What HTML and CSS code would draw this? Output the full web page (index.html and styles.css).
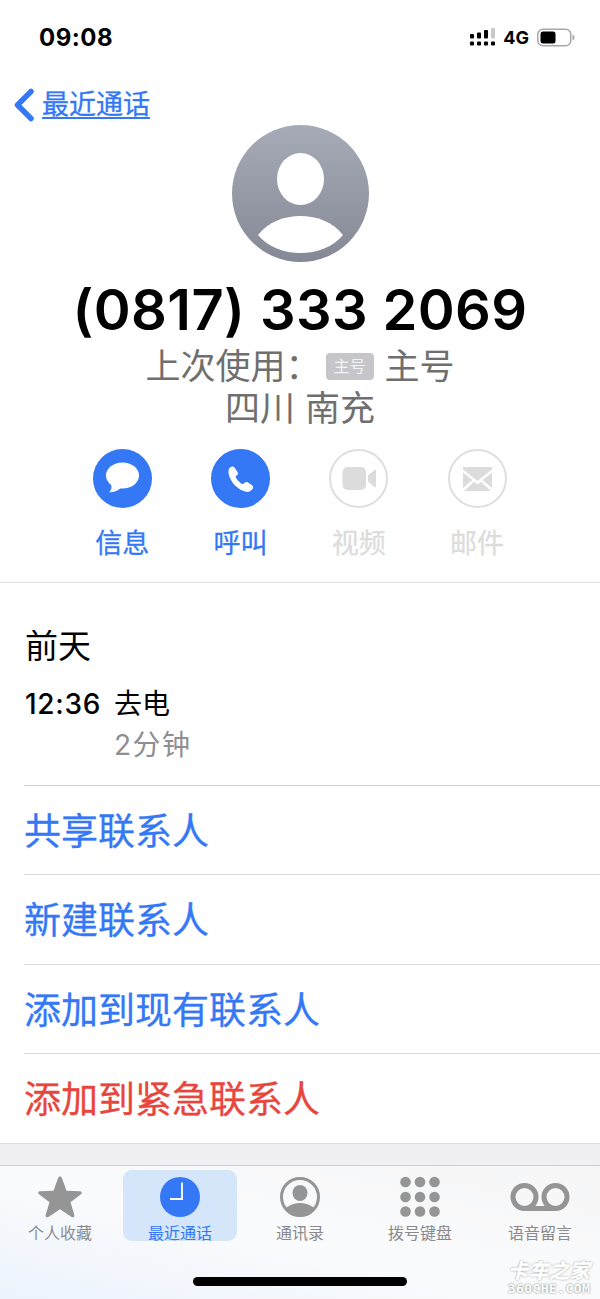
FILE: index.html
```html
<!DOCTYPE html>
<html lang="zh-CN">
  <head>
    <meta charset="UTF-8">
    <meta name="viewport" content="width=device-width, initial-scale=1.0">
    <title>最近通话</title>
    <link rel="stylesheet" href="styles.css">
  </head>
  <body>
    <div class="screen">
      <div class="status-bar">
        <span class="time">09:08</span>
        <div class="status-right">
          <svg class="signal" width="25" height="19" viewBox="0 0 25 19">
            <rect x="0" y="13.500" width="4" height="4" rx="1"/>
            <rect x="7" y="13.500" width="4" height="4" rx="1"/>
            <rect x="14" y="13.500" width="4" height="4" rx="1"/>
            <rect x="21" y="13.500" width="4" height="4" rx="1"/>
            <rect x="0" y="6" width="4" height="4.500" rx="1"/>
            <rect x="7" y="4.500" width="4" height="6" rx="1"/>
            <rect x="14" y="2" width="4" height="8.500" rx="1"/>
            <rect x="21" y="0" width="4" height="10.500" rx="1" fill="#c9c9c9"/>
          </svg>
          <span class="net">4G</span>
          <svg class="battery" width="38" height="19" viewBox="0 0 38 19">
            <rect x="0.75" y="1.25" width="33" height="16.5" rx="5" fill="none" stroke="#a8a8a8" stroke-width="1.5"/>
            <rect x="3.5" y="3.5" width="15" height="12" rx="2.5" fill="#000"/>
            <path d="M35.5 6.5c1.5.6 2 1.7 2 3s-.5 2.400-2 3z" fill="#a8a8a8"/>
          </svg>
        </div>
      </div>

      <div class="nav">
        <svg width="22" height="34" viewBox="0 0 22 34">
          <path d="M18 3.500 4.500 17 18 30.500" fill="none" stroke="#3478f6" stroke-width="5.500" stroke-linecap="round" stroke-linejoin="round"/>
        </svg>
        <span class="back-label">最近通话</span>
      </div>

      <div class="contact">
        <svg class="avatar" width="137" height="137" viewBox="0 0 137 137">
          <defs>
            <linearGradient id="avatarFill" x1="0" y1="0" x2="0" y2="1">
              <stop offset="0" stop-color="#a7abb8"/>
              <stop offset="1" stop-color="#858995"/>
            </linearGradient>
          </defs>
          <circle cx="68.500" cy="68.500" r="68.500" fill="url(#avatarFill)"/>
          <ellipse cx="68.500" cy="54" rx="23.500" ry="26" fill="#fff"/>
          <path d="M26 110C36 97 52 91 68.500 91S101 97 111 110C101 122 85 128 68.500 128S36 122 26 110Z" fill="#fff"/>
        </svg>
        <div class="number">(0817) 333 2069</div>
        <div class="meta meta-used">
          <span>上次使用：</span>
          <span class="sim-badge">主号</span>
          <span>主号</span>
        </div>
        <div class="meta">四川 南充</div>
      </div>

      <div class="actions">
        <div class="action">
          <div class="action-icon on">
            <svg width="59" height="59" viewBox="0 0 59 59">
              <ellipse cx="29.500" cy="26.500" rx="16.500" ry="13" fill="#fff"/>
              <path d="M18 35c1 3.500.5 6-1.800 8.300 4.300.2 8.300-1.300 11.800-4.300z" fill="#fff"/>
            </svg>
          </div>
          <span class="action-label">信息</span>
        </div>
        <div class="action">
          <div class="action-icon on">
            <svg width="59" height="59" viewBox="0 0 59 59">
              <path d="M19 18.500C20.500 17 22.500 17 23.500 18.500L26.500 23C27.300 24.300 27 25.500 26 26.300L24.500 27.500C25.500 30.500 29 34 32 35.300L33.500 33.800C34.500 32.800 35.800 32.600 37 33.400L41 36.200C42.500 37.300 42.500 39 41.300 40.300C39.500 42.300 37.500 43.300 35 42.800C27 41 19.500 33.500 17.700 25C17.200 22.500 17.500 20 19 18.500Z" fill="#fff"/>
            </svg>
          </div>
          <span class="action-label">呼叫</span>
        </div>
        <div class="action off">
          <div class="action-icon">
            <svg width="59" height="59" viewBox="0 0 59 59">
              <rect x="13.500" y="18" width="23.500" height="23" rx="5" fill="#dcdcdc"/>
              <path d="M39 26.500 45.500 21c.8-.6 1.500-.2 1.500.8v15.400c0 1-.7 1.400-1.500.8L39 32.500z" fill="#dcdcdc"/>
            </svg>
          </div>
          <span class="action-label">视频</span>
        </div>
        <div class="action off">
          <div class="action-icon">
            <svg width="59" height="59" viewBox="0 0 59 59">
              <path d="M15 20.500 29.500 32 44 20.500V18H15z" fill="#dcdcdc"/>
              <path d="M15 23.500V39l9.500-8zM44 23.500V39l-9.500-8zM16 42h27l-10-9.300-3.500 2.800-3.500-2.800z" fill="#dcdcdc"/>
            </svg>
          </div>
          <span class="action-label">邮件</span>
        </div>
      </div>

      <div class="history">
        <div class="history-day">前天</div>
        <div class="history-row">
          <span class="history-time">12:36</span>
          <div>
            <div class="history-type">去电</div>
            <div class="history-length">2分钟</div>
          </div>
        </div>
      </div>

      <div class="options">
        <div class="option">共享联系人</div>
        <div class="option">新建联系人</div>
        <div class="option">添加到现有联系人</div>
        <div class="option danger">添加到紧急联系人</div>
      </div>

      <div class="spacer"></div>

      <div class="tab-bar">
        <div class="tabs">
          <div class="tab">
            <svg width="46" height="44" viewBox="0 0 46 44">
              <path d="M23 1.500c1 0 1.600.6 2 1.700l4.500 12.600 13.300.4c2 .1 2.700 1.800 1.200 3l-10.500 8 3.800 12.800c.5 1.900-1.100 3-2.700 1.900L23 34.300l-11.600 7.600c-1.600 1.100-3.200 0-2.700-1.900l3.800-12.800-10.500-8c-1.500-1.200-.8-2.900 1.200-3l13.300-.4L21 3.200c.4-1.100 1-1.700 2-1.700z" fill="#959595"/>
            </svg>
            <span class="tab-label">个人收藏</span>
          </div>
          <div class="tab active">
            <svg width="46" height="44" viewBox="0 0 46 44">
              <circle cx="23" cy="22" r="20" fill="#3478f6"/>
              <path d="M25 7.500V24H13" fill="none" stroke="#fff" stroke-width="1.800"/>
            </svg>
            <span class="tab-label">最近通话</span>
          </div>
          <div class="tab">
            <svg width="46" height="44" viewBox="0 0 46 44">
              <defs>
                <clipPath id="contactClip"><circle cx="23" cy="22" r="18"/></clipPath>
              </defs>
              <circle cx="23" cy="22" r="18.500" fill="none" stroke="#959595" stroke-width="3"/>
              <ellipse cx="23" cy="18" rx="7.500" ry="8" fill="#959595"/>
              <ellipse cx="23" cy="40" rx="17" ry="12" fill="#959595" clip-path="url(#contactClip)"/>
            </svg>
            <span class="tab-label">通讯录</span>
          </div>
          <div class="tab">
            <svg width="46" height="44" viewBox="0 0 46 44">
              <g fill="#959595">
                <circle cx="8.500" cy="7" r="5.300"/><circle cx="23" cy="7" r="5.300"/><circle cx="37.500" cy="7" r="5.300"/>
                <circle cx="8.500" cy="22" r="5.300"/><circle cx="23" cy="22" r="5.300"/><circle cx="37.500" cy="22" r="5.300"/>
                <circle cx="8.500" cy="36.500" r="5.300"/><circle cx="23" cy="36.500" r="5.300"/><circle cx="37.500" cy="36.500" r="5.300"/>
              </g>
            </svg>
            <span class="tab-label">拨号键盘</span>
          </div>
          <div class="tab">
            <svg width="62" height="44" viewBox="0 0 62 44">
              <g fill="none" stroke="#959595" stroke-width="5">
                <circle cx="15.500" cy="22" r="11.500"/>
                <circle cx="46.500" cy="22" r="11.500"/>
                <path d="M15.500 33.500h31"/>
              </g>
            </svg>
            <span class="tab-label">语音留言</span>
          </div>
        </div>
        <div class="home-bar"></div>
        <div class="watermark">
          <span class="wm-name">卡车之家</span>
          <span class="wm-url">360CHE.COM</span>
        </div>
      </div>
    </div>
  </body>
</html>
```

FILE: styles.css
```css
* { box-sizing: border-box; }
html, body { margin: 0; padding: 0; background: #fff; }
body { font-family: Inter, "Noto Sans CJK SC", sans-serif; color: #000; }
.screen { width: 600px; height: 1299px; display: flex; flex-direction: column; overflow: hidden; }

.status-bar { height: 74px; flex-shrink: 0; padding: 0 25px 0 39px; display: flex; align-items: center; justify-content: space-between; }
.time { font-size: 24px; font-weight: 700; letter-spacing: 0.5px; }
.status-right { display: flex; align-items: center; gap: 8px; }
.net { font-size: 18px; font-weight: 700; }

.nav { height: 51px; padding: 14px 0 0 13px; display: flex; align-items: flex-start; gap: 7px; flex-shrink: 0; }
.back-label { font-size: 27px; line-height: 34px; color: #3478f6; text-decoration: underline; text-underline-offset: 3px; text-decoration-thickness: 1.5px; -webkit-text-stroke: 0.3px #3478f6; }

.contact { display: flex; flex-direction: column; align-items: center; }
.avatar { display: block; }
.number { font-size: 56px; font-weight: 600; line-height: 64px; margin-top: 16px; letter-spacing: 0.4px; }
.meta { font-size: 35px; line-height: 42px; color: #6f6f6f; }
.meta-used { display: flex; align-items: center; margin-top: 3px; }
.sim-badge { margin: 0 11px 0 5px; width: 48px; height: 27px; border-radius: 4px; background: #c6c6ca; color: #f4f4f6; font-size: 16px; line-height: 27px; text-align: center; }

.actions { display: flex; padding: 20px 0 0 63px; }
.action { width: 118.300px; display: flex; flex-direction: column; align-items: center; }
.action-icon { width: 59px; height: 59px; border-radius: 50%; border: 2px solid #dedede; position: relative; }
.action-icon svg { position: absolute; left: -2px; top: -2px; }
.action-icon.on { background: #3478f6; border-color: #3478f6; }
.action-label { font-size: 27px; line-height: 40px; margin-top: 16px; color: #3478f6; -webkit-text-stroke: 0.3px #3478f6; }
.off .action-label { color: #dcdcdc; -webkit-text-stroke-color: #dcdcdc; }

.history { margin-top: 18px; border-top: 1px solid #e2e2e4; padding: 40px 0 20px 25px; }
.history-day { font-size: 33px; line-height: 46px; }
.history-row { display: flex; margin-top: 15px; }
.history-time { font-size: 28px; font-weight: 500; line-height: 40px; width: 89px; letter-spacing: 0.7px; }
.history-type { font-size: 28px; line-height: 40px; }
.history-length { font-size: 28px; line-height: 40px; margin-top: 1px; color: #8e8e93; letter-spacing: 1.500px; }

.options { margin-left: 24px; border-top: 1px solid #cfcfd2; }
.option { height: 89.300px; padding-top: 2px; font-size: 37px; line-height: 88px; color: #3478f6; border-bottom: 1px solid #dcdcde; -webkit-text-stroke: 0.3px #3478f6; }
.option.danger { color: #e8453c; border-bottom: 0; -webkit-text-stroke-color: #e8453c; }

.spacer { height: 23px; flex-shrink: 0; background: #f0eff4; border-top: 1px solid #dcdcde; border-bottom: 1px solid #cfcfd2; }

.tab-bar { flex: 1; position: relative; background: linear-gradient(to top right, #ecf3fc 0%, #fafbfc 45%, #f6f6f7 100%); display: flex; flex-direction: column; align-items: center; }
.tabs { width: 100%; display: grid; grid-template-columns: repeat(5, 1fr); padding-top: 4px; }
.tab { height: 71px; margin: 0 3px; padding-top: 5px; border-radius: 9px; display: flex; flex-direction: column; align-items: center; }
.tab svg { display: block; flex-shrink: 0; }
.tab-label { font-size: 16px; line-height: 20px; margin-top: 4px; color: #8a8a8e; flex-shrink: 0; }
.tab.active { background: #d5e5fa; }
.tab.active .tab-label { color: #3478f6; }
.home-bar { width: 214px; height: 9px; margin-top: 36px; border-radius: 5px; background: #000; }

.watermark { position: absolute; right: 9px; bottom: 5px; width: 84px; display: flex; flex-direction: column; align-items: center; color: #fff; text-shadow: 0 0 2px rgba(0,0,0,0.6); }
.wm-name { font-size: 20px; font-weight: 700; font-style: italic; line-height: 21px; letter-spacing: 0.5px; -webkit-text-stroke: 0.5px #fff; }
.wm-url { font-family: "DejaVu Sans Mono", monospace; font-size: 13px; font-weight: 700; line-height: 11px; margin-top: 1px; letter-spacing: 0.4px; }
```
